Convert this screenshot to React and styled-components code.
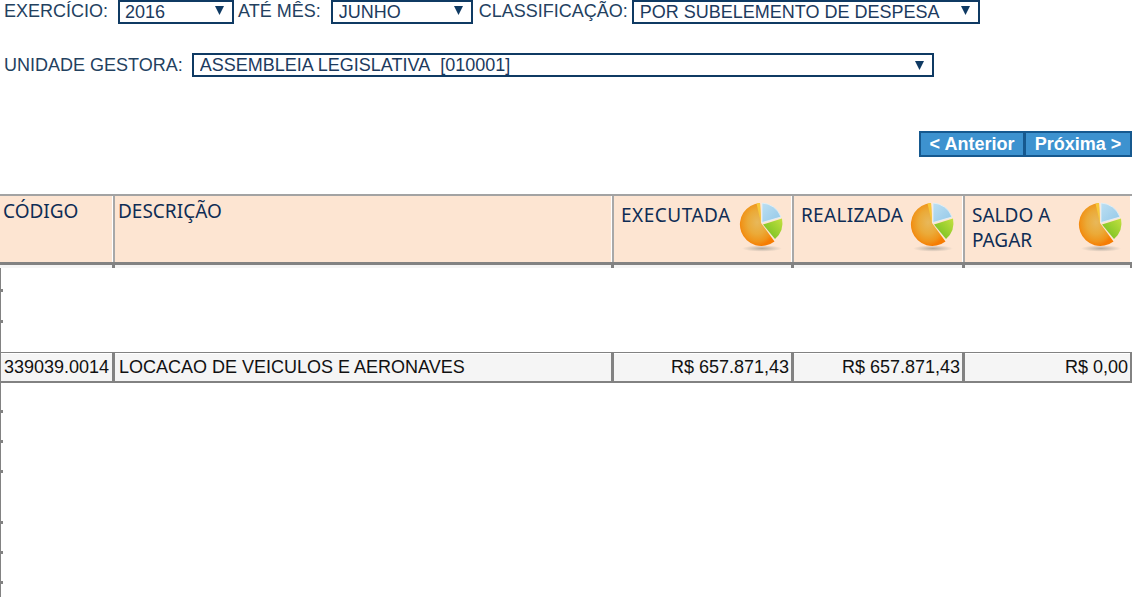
import React from "react";
import styled, { createGlobalStyle } from "styled-components";

const Global = createGlobalStyle`
  html, body { margin: 0; padding: 0; background: #fff; overflow: hidden; }
  body { font-family: "Liberation Sans", Arial, sans-serif; }
`;

const Page = styled.div`
  width: 1144px;
  height: 597px;
  overflow: hidden;
`;
const Filters = styled.div`
  display: flex;
  align-items: flex-start;
  height: 53px;
  padding-left: 4px;
  box-sizing: border-box;
`;
const FiltersSecond = styled(Filters)`
  height: 78px;
`;
const Label = styled.label`
  font-size: 18px;
  line-height: 22px;
  margin-top: ${(p) => p.$mt || 0}px;
  color: #23415f;
  margin-right: ${(p) => p.$gap}px;
  white-space: nowrap;
`;
const SelectBox = styled.div`
  position: relative;
  width: ${(p) => p.$w}px;
  height: 24px;
  margin-right: ${(p) => p.$gap || 0}px;
  box-sizing: border-box;
  border: 2px solid #0f3a63;
  background: #fff;
  flex: none;
`;
const Select = styled.select`
  appearance: none;
  display: block;
  width: 100%;
  height: 100%;
  border: 0;
  outline: 0;
  background: transparent;
  padding: 0 0 0 ${(p) => p.$pl}px;
  margin: 0;
  font: 18px/20px "Liberation Sans", Arial, sans-serif;
  color: #1c3a5e;
`;
const Arrow = styled.svg`
  position: absolute;
  right: 8px;
  top: ${(p) => p.$top}px;
  width: 9px;
  height: 9px;
  pointer-events: none;
`;
const Pager = styled.div`
  display: flex;
  justify-content: flex-end;
  width: 1132px;
  height: 63px;
`;
const PageButton = styled.button`
  box-sizing: border-box;
  width: ${(p) => p.$w}px;
  height: 26px;
  margin: 0;
  padding: 0;
  border: 2px solid #16598f;
  border-left-width: ${(p) => p.$bl}px;
  background: #3d92cf;
  color: #fff;
  font: bold 18px "Liberation Sans", Arial, sans-serif;
`;
const Head = styled.div`
  display: grid;
  grid-template-columns: 112px 3px 496px 3px 177px 3px 168px 3px 165px;
  width: 1132px;
  height: 71px;
  border-top: 2px solid #a3a3a3;
  border-bottom: 3px solid #828282;
  box-sizing: border-box;
`;
const HeadCell = styled.div`
  background: #fde5d2;
  display: flex;
  justify-content: space-between;
  align-items: flex-start;
  padding: ${(p) => p.$pt}px ${(p) => p.$pr}px 0 ${(p) => p.$pl}px;
  box-sizing: border-box;
  font-family: "Noto Sans", sans-serif;
  font-size: 19px;
  line-height: 25px;
  letter-spacing: ${(p) => p.$track || 0}px;
  color: #0f2d55;
  min-width: 0;
`;
const HeadSep = styled.div`
  background: #a8a8a8;
  border-left: 1px solid #fff;
`;
const PieBox = styled.svg`
  width: 50px;
  height: 50px;
  flex: none;
  margin-top: -1px;
`;
const Notches = styled.div`
  display: grid;
  grid-template-columns: 112px 3px 496px 3px 177px 3px 168px 3px 165px 2px;
  width: 1132px;
  height: 3px;
`;
const Notch = styled.div`
  background: ${(p) => (p.$on ? "#828282" : "#f5f5f5")};
`;
const Gap = styled.div`
  border-left: 1px solid #828282;
  width: 1132px;
  height: ${(p) => p.$h}px;
  box-sizing: border-box;
  display: flex;
  flex-direction: column;
`;
const Tick = styled.div`
  width: 3px;
  height: 3px;
  margin-left: -1px;
  margin-top: ${(p) => p.$mt}px;
  background: #828282;
`;
const Row = styled.div`
  display: grid;
  grid-template-columns: 111px 3px 496px 3px 177px 3px 168px 3px 165px;
  width: 1132px;
  height: 31px;
  box-sizing: border-box;
  border: solid #828282;
  border-width: 1px 2px 3px 1px;
`;
const Cell = styled.div`
  background: #f5f5f5;
  font-size: 18px;
  line-height: 27px;
  color: #111;
  padding: 0 ${(p) => (p.$right ? 2 : 0)}px 0 ${(p) => (p.$right ? 0 : 3)}px;
  text-align: ${(p) => (p.$right ? "right" : "left")};
  white-space: nowrap;
  border-top: 1px solid #fff;
`;
const CellWide = styled(Cell)`
  padding-left: 4px;
`;
const RowSep = styled.div`
  background: #828282;
`;

function Pie({ id }) {
  return (
    <PieBox viewBox="0 0 50 50">
      <defs>
        <radialGradient id={`o${id}`} cx="50%" cy="45%" r="55%">
          <stop offset="0%" stopColor="#e8b85a" />
          <stop offset="50%" stopColor="#ebaa38" />
          <stop offset="82%" stopColor="#f0941a" />
          <stop offset="100%" stopColor="#f67c02" />
        </radialGradient>
        <linearGradient id={`b${id}`} x1="0" y1="0" x2="1" y2="1">
          <stop offset="0%" stopColor="#bcdff2" />
          <stop offset="100%" stopColor="#94c8e8" />
        </linearGradient>
        <linearGradient id={`g${id}`} x1="1" y1="0" x2="0" y2="1">
          <stop offset="0%" stopColor="#c4e040" />
          <stop offset="100%" stopColor="#68bb1c" />
        </linearGradient>
        <radialGradient id={`s${id}`}>
          <stop offset="0%" stopColor="#9c9890" stopOpacity=".75" />
          <stop offset="100%" stopColor="#9c9890" stopOpacity="0" />
        </radialGradient>
      </defs>
      <ellipse cx="24" cy="46.5" rx="20" ry="3.2" fill={`url(#s${id})`} />
      <path d="M23 21 L22 1 A21.5 21.5 0 1 0 36.5 39.5 Z" fill={`url(#o${id})`} />
      <path d="M23 21 L22 1 L18.5 1.6 Z" fill="#f7c93a" />
      <path d="M24 20.5 L24 1 A21 21 0 0 1 43 15 Z" fill={`url(#b${id})`} stroke="#e4f1f8" strokeWidth=".8" />
      <path d="M25 22.5 L44 16.5 A21.5 21.5 0 0 1 37 37 Z" fill={`url(#g${id})`} />
    </PieBox>
  );
}

const TriangleIcon = ({ top = 4 }) => (
  <Arrow $top={top} viewBox="0 0 9 9">
    <path d="M0 0 H9 L4.5 9 Z" fill="#0f3a63" />
  </Arrow>
);

export default function App() {
  return (
    <Page>
      <Global />
      <Filters>
        <Label $gap={10}>EXERCÍCIO:</Label>
        <SelectBox $w={116} $gap={4}>
          <Select $pl={5} defaultValue="2016"><option>2016</option></Select>
          <TriangleIcon />
        </SelectBox>
        <Label $gap={10}>ATÉ MÊS:</Label>
        <SelectBox $w={142} $gap={6}>
          <Select $pl={6} defaultValue="JUNHO"><option>JUNHO</option></Select>
          <TriangleIcon />
        </SelectBox>
        <Label $gap={4}>CLASSIFICAÇÃO:</Label>
        <SelectBox $w={348}>
          <Select $pl={6} defaultValue="P"><option value="P">POR SUBELEMENTO DE DESPESA</option></Select>
          <TriangleIcon />
        </SelectBox>
      </Filters>
      <FiltersSecond>
        <Label $gap={9} $mt={1}>UNIDADE GESTORA:</Label>
        <SelectBox $w={742}>
          <Select $pl={6} defaultValue="A"><option value="A">ASSEMBLEIA LEGISLATIVA&nbsp; [010001]</option></Select>
          <TriangleIcon top={6} />
        </SelectBox>
      </FiltersSecond>
      <Pager>
        <PageButton $w={106} $bl={2}>&lt; Anterior</PageButton>
        <PageButton $w={107} $bl={1}>Próxima &gt;</PageButton>
      </Pager>
      <Head>
        <HeadCell $pl={3} $pt={3} $pr={0}>CÓDIGO</HeadCell>
        <HeadSep />
        <HeadCell $pl={3} $pt={3} $pr={0}>DESCRIÇÃO</HeadCell>
        <HeadSep />
        <HeadCell $pl={7} $pt={7} $pr={3} $track={0.5}>EXECUTADA<Pie id="a" /></HeadCell>
        <HeadSep />
        <HeadCell $pl={7} $pt={7} $pr={3} $track={0.3}>REALIZADA<Pie id="b" /></HeadCell>
        <HeadSep />
        <HeadCell $pl={7} $pt={7} $pr={3}><span>SALDO A<br />PAGAR</span><Pie id="c" /></HeadCell>
      </Head>
      <Notches>
        <Notch /><Notch $on /><Notch /><Notch $on /><Notch /><Notch $on /><Notch /><Notch $on /><Notch /><Notch $on />
      </Notches>
      <Gap $h={84}>
        <Tick $mt={21} />
        <Tick $mt={28} />
      </Gap>
      <Row>
        <Cell>339039.0014</Cell>
        <RowSep />
        <CellWide>LOCACAO DE VEICULOS E AERONAVES</CellWide>
        <RowSep />
        <Cell $right>R$ 657.871,43</Cell>
        <RowSep />
        <Cell $right>R$ 657.871,43</Cell>
        <RowSep />
        <Cell $right>R$ 0,00</Cell>
      </Row>
      <Gap $h={214}>
        <Tick $mt={27} />
        <Tick $mt={27} />
        <Tick $mt={27} />
        <Tick $mt={48} />
        <Tick $mt={27} />
        <Tick $mt={27} />
      </Gap>
    </Page>
  );
}
